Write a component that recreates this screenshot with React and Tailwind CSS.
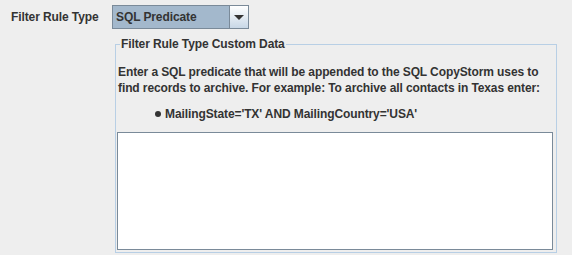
export default function App() {
  return (
    <div className="w-[572px] h-[255px] bg-[#eeeeee] text-[#333333] font-['Liberation_Sans',Arial,sans-serif] text-[12px] font-bold tracking-[-0.1px] overflow-hidden">
      <div className="flex items-center pt-[5px] pl-[11px]">
        <span className="w-[101px]">Filter Rule Type</span>
        <div className="flex h-[24px] w-[137px] border border-[#7a8a99] bg-[#a3b8cc]">
          <div className="flex-1 flex items-center pl-[3px] border-r border-[#7a8a99]">SQL Predicate</div>
          <div className="w-[18px] flex items-center justify-center bg-gradient-to-b from-white to-[#c8d7e6]">
            <svg width="10" height="5" viewBox="0 0 10 5">
              <path d="M0 0 L10 0 L5 5 Z" fill="#333333" />
            </svg>
          </div>
        </div>
      </div>
      <fieldset className="ml-[115px] mt-[8px] w-[442px] h-[216px] border border-[#b8cfe5] px-[1px] pb-[3px]">
        <legend className="ml-[3px] px-[1px] leading-[14px]">Filter Rule Type Custom Data</legend>
        <p className="mt-[13px] leading-[16px] px-[1px]">
          Enter a SQL predicate that will be appended to the SQL CopyStorm uses to find records to archive. For example: To archive all contacts in Texas enter:
        </p>
        <div className="flex items-center mt-[10px] ml-[38px] gap-[4px] leading-[16px]">
          <span className="w-[6px] h-[6px] rounded-full bg-[#333333]" />
          <span>MailingState='TX' AND MailingCountry='USA'</span>
        </div>
        <div className="mt-[10px] h-[118px] w-[436px] bg-white border border-[#7a8a99]" />
      </fieldset>
    </div>
  );
}
